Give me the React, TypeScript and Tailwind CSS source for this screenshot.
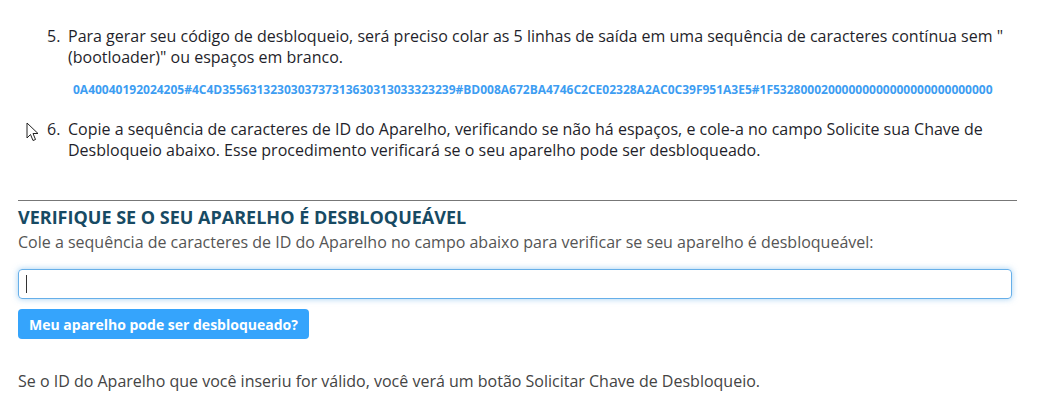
const CODE =
  "0A40040192024205#4C4D3556313230303737313630313033323239#BD008A672BA4746C2CE02328A2AC0C39F951A3E5#1F53280002000000000000000000000000";

function Cursor() {
  return (
    <svg width="14" height="20" viewBox="0 0 14 20" className="absolute -left-[42px] top-[24px]">
      <path d="M1 1 L1 16 L4.5 12.5 L7 18.5 L9.5 17.5 L7 11.5 L12 11.5 Z" fill="#fff" stroke="#222" strokeWidth="1" strokeLinejoin="round" />
    </svg>
  );
}

export default function App() {
  return (
    <div className="w-[1046px] h-[415px] bg-white overflow-hidden font-['Open_Sans',sans-serif] text-[#1f1f2b]">
      <div className="pl-[18px] pr-[29px] pt-[26px]">
        <ol className="pl-[50px] text-[16px] leading-[21px]">
          <li className="relative">
            <span className="absolute -left-[21px]">5.</span>
            Para gerar seu código de desbloqueio, será preciso colar as 5 linhas de saída em uma sequência de caracteres contínua sem " (bootloader)" ou espaços em branco.
            <div className="pl-[5px] pt-[14px] text-[12px] leading-[16px] font-bold text-[#3d9df2]">{CODE}</div>
          </li>
          <li className="relative pt-[21px]">
            <span className="absolute -left-[21px] top-[21px]">6.</span>
            <Cursor />
            Copie a sequência de caracteres de ID do Aparelho, verificando se não há espaços, e cole-a no campo Solicite sua Chave de Desbloqueio abaixo. Esse procedimento verificará se o seu aparelho pode ser desbloqueado.
          </li>
        </ol>

        <hr className="mt-[39px] border-t border-[#777]" />

        <h2 className="mt-[4px] text-[18px] leading-[24px] font-bold text-[#174a63]">VERIFIQUE SE O SEU APARELHO É DESBLOQUEÁVEL</h2>
        <p className="mt-[3px] text-[16px] leading-[21px] text-[#555]">
          Cole a sequência de caracteres de ID do Aparelho no campo abaixo para verificar se seu aparelho é desbloqueável:
        </p>

        <div className="mt-[16px] mr-[5px] h-[30px] rounded-[4px] border border-[#66afe9] shadow-[0_0_6px_rgba(102,175,233,0.6)] flex items-center pl-[7px]">
          <span className="w-px h-[18px] bg-[#333]" />
        </div>

        <button className="mt-[10px] h-[30px] px-[11px] rounded-[4px] bg-[#35a4fc] text-white text-[14px] font-bold">
          Meu aparelho pode ser desbloqueado?
        </button>

        <p className="mt-[32px] text-[16px] leading-[21px] text-[#444]">
          Se o ID do Aparelho que você inseriu for válido, você verá um botão Solicitar Chave de Desbloqueio.
        </p>
      </div>
    </div>
  );
}
